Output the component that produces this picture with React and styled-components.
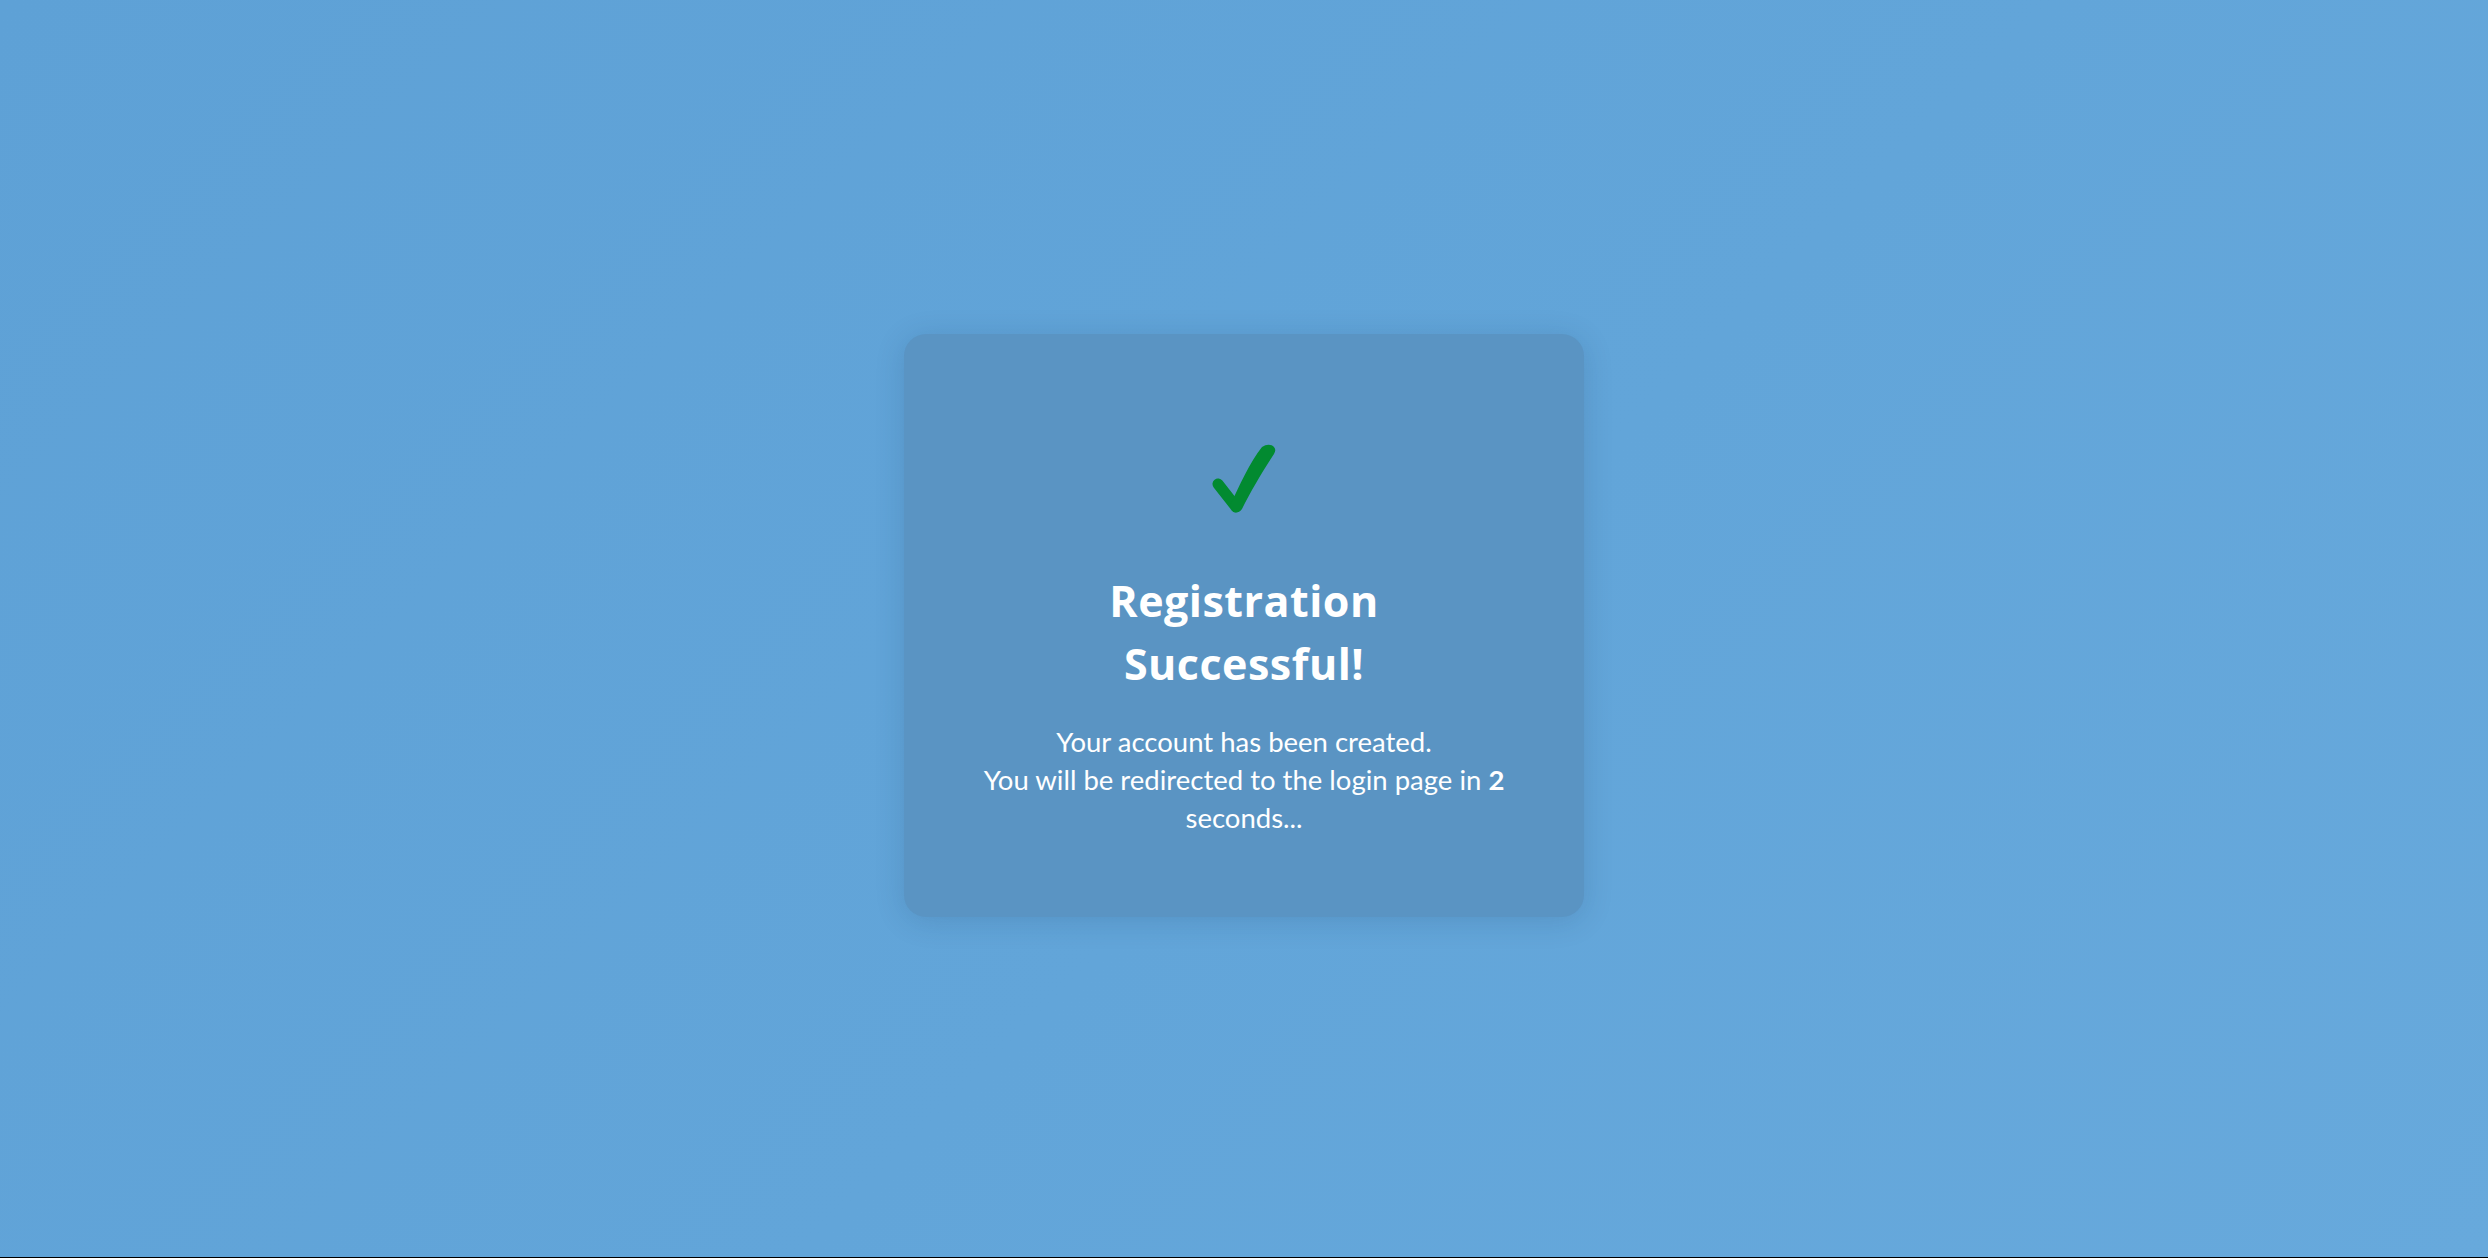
import React from 'react';
import styled, { createGlobalStyle } from 'styled-components';

const GlobalStyle = createGlobalStyle`
  html, body {
    margin: 0;
    padding: 0;
    background: #000;
  }
  body {
    font-family: 'Segoe UI', Lato, 'Open Sans', sans-serif;
    font-variant-ligatures: none;
  }
`;

const Page = styled.div`
  box-sizing: border-box;
  height: calc(100vh - 1px);
  padding-bottom: 7px;
  display: flex;
  align-items: center;
  justify-content: center;
  background: linear-gradient(135deg, #5ea1d6 0%, #62a5d9 55%, #67a9dc 100%);
`;

const Card = styled.div`
  box-sizing: border-box;
  width: 680px;
  padding: 67px 70px 80px;
  border-radius: 22px;
  background: #5a94c3;
  box-shadow: 0 4px 30px rgba(20, 50, 90, 0.16);
  display: flex;
  flex-direction: column;
  align-items: center;
  text-align: center;
  color: #fff;
`;

const CheckWrap = styled.div`
  margin-top: 43px;
  height: 68px;
  display: flex;
  justify-content: center;
`;

const Title = styled.h1`
  max-width: 420px;
  margin: 57px 0 0;
  font-family: 'Segoe UI', 'Open Sans', Lato, sans-serif;
  font-size: 43px;
  line-height: 63px;
  font-weight: 700;
  letter-spacing: 0.5px;
`;

const Message = styled.p`
  margin: 28px 0 0;
  font-size: 27.5px;
  line-height: 38px;
  font-weight: 400;

  strong {
    font-weight: 700;
  }
`;

function CheckMark() {
  return (
    <svg width="64" height="69" viewBox="0 0 64 69">
      <path d="M6 40 L24 63" stroke="#028a30" strokeWidth="11" strokeLinecap="round" fill="none" />
      <path
        d="M18 62 C27 42, 38 18, 50 3 Q56 -1 61 2 Q65 5 62 10 C51 27, 39 47, 30 65 Q27 69 22 68 Z"
        fill="#028a30"
      />
    </svg>
  );
}

export default function App() {
  return (
    <>
      <GlobalStyle />
      <Page>
        <Card>
          <CheckWrap>
            <CheckMark />
          </CheckWrap>
          <Title>Registration Successful!</Title>
          <Message>
            Your account has been created.
            <br />
            You will be redirected to the login page in <strong>2</strong> seconds...
          </Message>
        </Card>
      </Page>
    </>
  );
}
